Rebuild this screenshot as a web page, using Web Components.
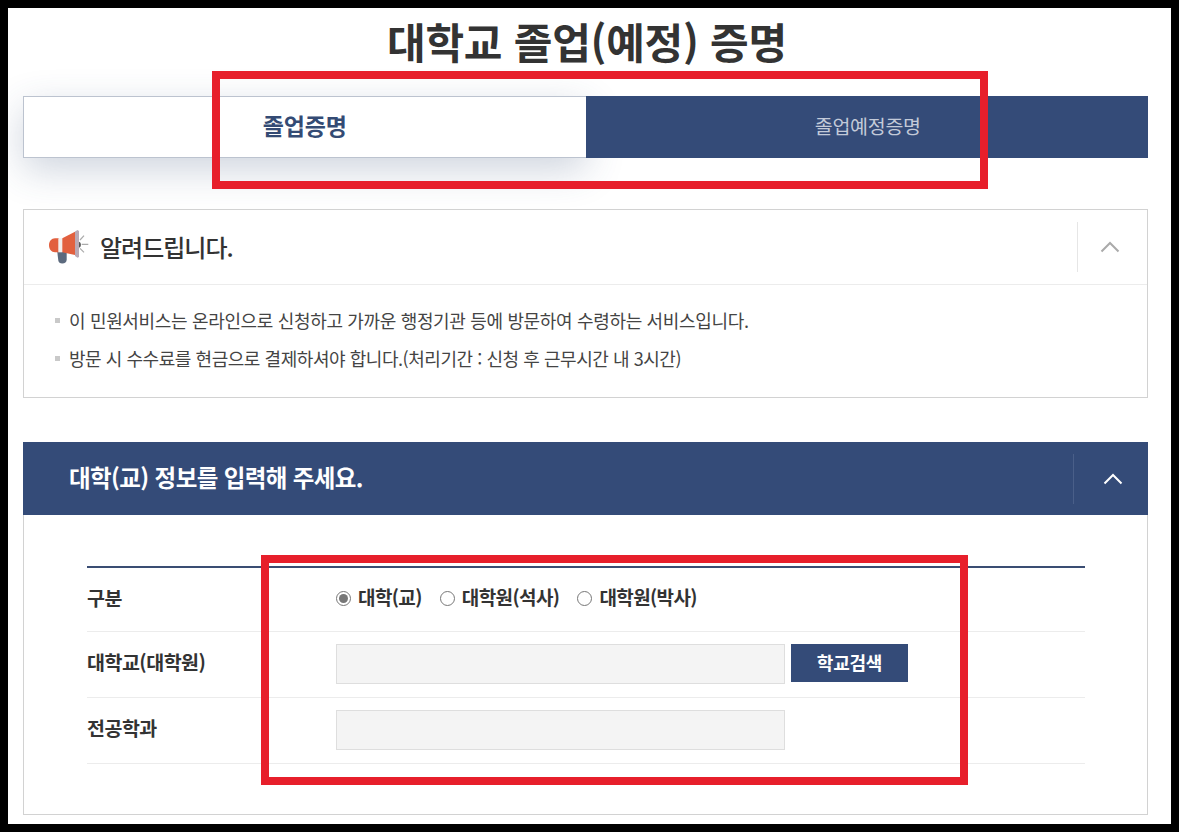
<!DOCTYPE html>
<html lang="ko">
<head>
	<meta charset="utf-8">
	<title>대학교 졸업(예정) 증명</title>
	<style>
		html, body { margin: 0; padding: 0; background: #000; }
		body { padding: 8px; font-family: "Noto Sans CJK KR", "Noto Sans", sans-serif; color: #333; }
	</style>
</head>
<body>
	<template id="cert-page-template">
		<style>
			:host { display: block; position: relative; width: 1163px; height: 816px; box-sizing: border-box; padding: 0 23px 0 15px; background: #fff; overflow: hidden; }
			h1 { margin: 0; height: 88px; padding: 3px 0 0 3px; box-sizing: border-box; font-size: 42px; line-height: 60px; font-weight: 700; text-align: center; color: #333; letter-spacing: -0.25px; }
			.stack { display: flex; flex-direction: column; }
		</style>
		<h1><slot name="title"></slot></h1>
		<div class="stack"><slot></slot></div>
	</template>

	<template id="cert-tabs-template">
		<style>
			:host { display: flex; height: 62px; margin-bottom: 51px; }
			.tab { flex: 0 0 50%; display: flex; align-items: center; justify-content: center; box-sizing: border-box; }
			.on { padding-bottom: 5px; border: 1px solid #bcc3cf; border-right: 0; background: #fff; color: #344b74; font-size: 23px; font-weight: 700; letter-spacing: -0.2px; box-shadow: 0 12px 38px rgba(52, 75, 116, .24); }
			.off { padding: 0 0 4px 2px; background: #344b78; color: #c3cad8; font-size: 19.500px; font-weight: 400; letter-spacing: -0.3px; }
		</style>
		<div class="tab on"><slot name="active"></slot></div>
		<div class="tab off"><slot name="other"></slot></div>
	</template>

	<template id="fold-head-template">
		<style>
			:host { display: flex; align-items: center; box-sizing: border-box; }
			.label { flex: 1; display: flex; align-items: center; }
			.toggle { flex: none; width: var(--fold-width, 70px); height: 50px; box-sizing: border-box; padding: 0 var(--fold-right, 5px) 0 var(--fold-left, 0); display: flex; align-items: center; justify-content: center; border-left: 1px solid var(--fold-line, #e6e6e6); }
			svg { display: block; width: 20px; height: 12px; fill: none; stroke: var(--fold-arrow, #aaa); stroke-width: 2; }
		</style>
		<div class="label"><slot></slot></div>
		<div class="toggle"><svg viewBox="0 0 20 12"><path d="M1.500 10.500 10 2l8.500 8.500"/></svg></div>
	</template>

	<template id="notice-box-template">
		<style>
			:host { display: block; height: 189px; box-sizing: border-box; margin-bottom: 44px; border: 1px solid #d2d2d2; background: #fff; }
			fold-head { height: 75px; padding-left: 25px; border-bottom: 1px solid #ececec; }
			.title { display: flex; align-items: center; gap: 11px; font-size: 24px; font-weight: 500; color: #333; letter-spacing: -1px; }
			.text { padding-bottom: 2px; }
			ul { margin: 0; padding: 16px 0 0 31px; list-style: none; }
		</style>
		<fold-head><span class="title"><slot name="icon"></slot><span class="text"><slot name="title"></slot></span></span></fold-head>
		<ul><slot></slot></ul>
	</template>

	<template id="notice-item-template">
		<style>
			:host { display: flex; align-items: center; gap: 9px; height: 38px; font-size: 18px; line-height: 38px; color: #444; letter-spacing: -0.34px; }
			i { flex: none; width: 5px; height: 5px; background: #c9c9c9; }
		</style>
		<i></i><span><slot></slot></span>
	</template>

	<template id="form-panel-template">
		<style>
			:host { display: block; }
			fold-head { height: 73px; padding-left: 46px; background: #344b78; color: #fff; font-size: 23.500px; font-weight: 700; letter-spacing: -0.6px; --fold-line: #4a5f89; --fold-arrow: #fff; --fold-width: 75px; --fold-right: 0px; --fold-left: 3px; }
			.title { padding-bottom: 4px; }
			.body { height: 300px; box-sizing: border-box; padding: 51px 62px 0 63px; border: 1px solid #d2d2d2; border-top: 0; }
			.rows { border-top: 2px solid #3a4d73; }
		</style>
		<fold-head><span class="title"><slot name="title"></slot></span></fold-head>
		<div class="body"><div class="rows"><slot></slot></div></div>
	</template>

	<template id="form-row-template">
		<style>
			:host { display: flex; align-items: center; height: 66px; box-sizing: border-box; padding-bottom: 1px; border-bottom: 1px solid #ececec; }
			:host([first]) { height: 64px; }
			:host([first]) .name { padding-bottom: 3px; }
			.name { flex: 0 0 249px; padding-bottom: 5px; font-size: 19.500px; font-weight: 700; color: #333; letter-spacing: -0.5px; }
			.field { flex: 1; display: flex; align-items: flex-start; gap: 6px; }
		</style>
		<div class="name"><slot name="name"></slot></div>
		<div class="field"><slot></slot></div>
	</template>

	<template id="radio-option-template">
		<style>
			:host { display: inline-flex; align-items: center; gap: 7px; margin-right: 12px; padding-bottom: 6px; font-size: 19px; font-weight: 700; color: #333; letter-spacing: -0.6px; }
			b { display: block; position: relative; width: 15px; height: 15px; margin-top: 5px; box-sizing: border-box; border: 1px solid #777; border-radius: 50%; }
			:host([checked]) b::after { content: ""; position: absolute; inset: 2px; border-radius: 50%; background: #777; }
		</style>
		<b></b><slot></slot>
	</template>

	<template id="text-box-template">
		<style>
			:host { display: block; width: 449px; height: 40px; box-sizing: border-box; border: 1px solid #dedede; background: #f4f4f4; }
		</style>
	</template>

	<template id="search-button-template">
		<style>
			:host { display: flex; align-items: center; justify-content: center; width: 117px; height: 38px; box-sizing: border-box; padding-bottom: 2px; background: #344b78; color: #fff; font-size: 18px; font-weight: 700; letter-spacing: -0.2px; }
		</style>
		<slot></slot>
	</template>

	<template id="red-mark-template">
		<style>
			:host { position: absolute; box-sizing: border-box; border: 8px solid #e71f2b; pointer-events: none; }
		</style>
	</template>

	<cert-page>
		<span slot="title">대학교 졸업(예정) 증명</span>

		<cert-tabs>
			<span slot="active">졸업증명</span>
			<span slot="other">졸업예정증명</span>
		</cert-tabs>

		<notice-box>
			<svg slot="icon" width="40" height="34" viewBox="0 0 40 34">
				<path d="M8.300 22h9.400v7.500c0 2.500-1.800 4-4.500 4-2.200 0-3.600-1.200-3.900-3z" fill="#5c6a7e"/>
				<path d="M6 8.300h4v14H6c-3.500 0-6-3-6-7s2.500-7 6-7z" fill="#e2603f"/>
				<rect x="9.300" y="8.300" width="4" height="14" fill="#f3efee"/>
				<path d="M13.300 8.300 26 1.700V25l-12.700-2.700z" fill="#e2603f"/>
				<path d="M26 1.500 28.500 0 30 1v26l-1.500.700L26 26z" fill="#b9a9b6"/>
				<path d="M30 11.700c2.500.5 2.500 5.500 0 6z" fill="#555"/>
				<path d="M31 10l4-4.300M32.700 14.300h6.600M31 18.300l4 4" stroke="#aaa" stroke-width="1.200" fill="none"/>
			</svg>
			<span slot="title">알려드립니다.</span>
			<notice-item>이 민원서비스는 온라인으로 신청하고 가까운 행정기관 등에 방문하여 수령하는 서비스입니다.</notice-item>
			<notice-item style="letter-spacing:-0.45px">방문 시 수수료를 현금으로 결제하셔야 합니다.(처리기간 : 신청 후 근무시간 내 3시간)</notice-item>
		</notice-box>

		<form-panel>
			<span slot="title">대학(교) 정보를 입력해 주세요.</span>
			<form-row first>
				<span slot="name">구분</span>
				<radio-option checked>대학(교)</radio-option>
				<radio-option>대학원(석사)</radio-option>
				<radio-option>대학원(박사)</radio-option>
			</form-row>
			<form-row>
				<span slot="name">대학교(대학원)</span>
				<text-box></text-box>
				<search-button>학교검색</search-button>
			</form-row>
			<form-row>
				<span slot="name">전공학과</span>
				<text-box></text-box>
			</form-row>
		</form-panel>

		<!-- 빨간 표시는 화면 위에 겹쳐 그린 것 -->
		<red-mark style="left:204px;top:63px;width:776px;height:118px"></red-mark>
		<red-mark style="left:253px;top:547px;width:707px;height:230px"></red-mark>
	</cert-page>

	<script>
		// template id 하나로 shadow root 만드는 공통 클래스
		function define(name) {
			customElements.define(name, class extends HTMLElement {
				constructor() {
					super();
					const content = document.getElementById(name + '-template').content;
					this.attachShadow({mode: 'open'}).appendChild(content.cloneNode(true));
				}
			});
		}

		['cert-page', 'cert-tabs', 'fold-head', 'notice-box', 'notice-item', 'form-panel',
			'form-row', 'radio-option', 'text-box', 'search-button', 'red-mark'].forEach(define);
	</script>
</body>
</html>
